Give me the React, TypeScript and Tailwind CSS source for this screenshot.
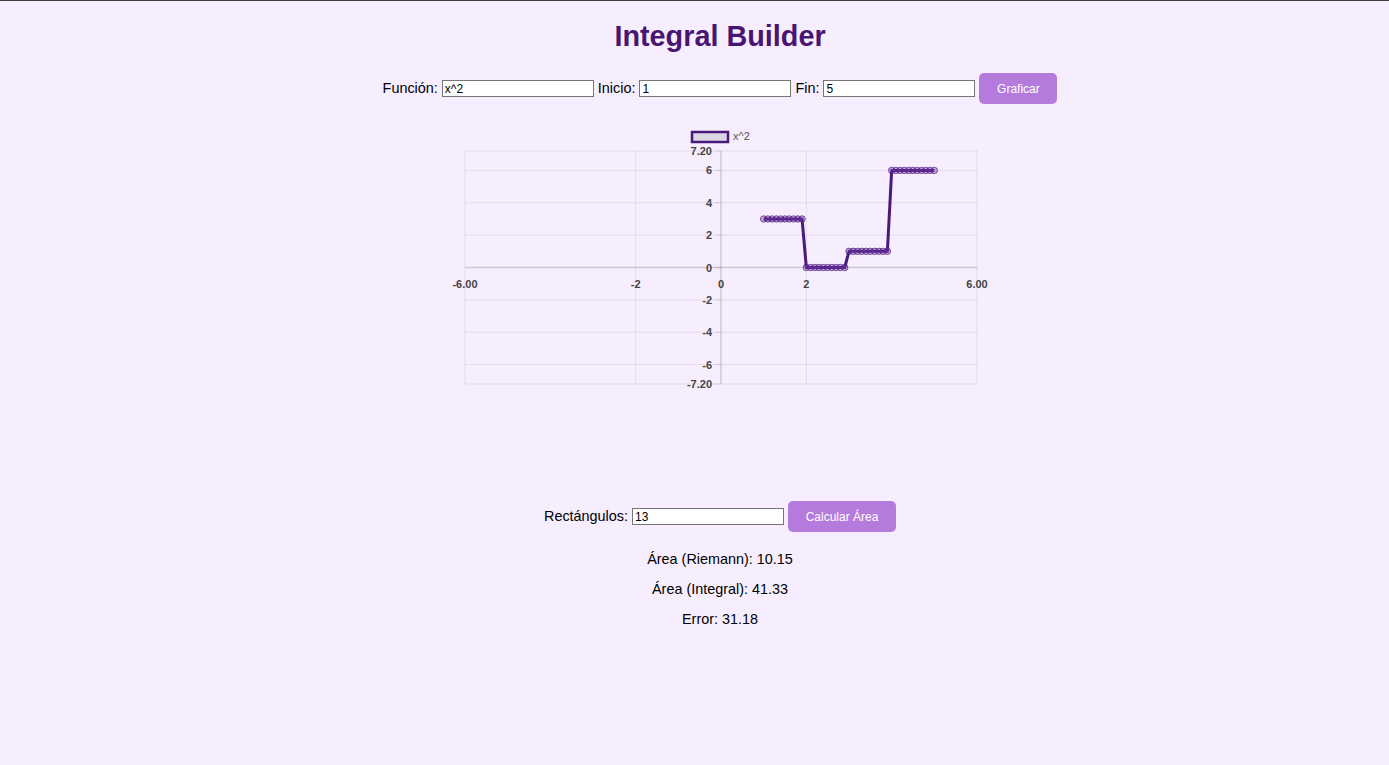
import React from "react";

const FONT = { fontFamily: '"Liberation Sans", Arial, sans-serif' };

// plot area inside the svg (svg sits at page x=420, y=112)
const LEFT = 45;
const RIGHT = 557;
const TOP = 39;
const BOTTOM = 272;
const X0 = 301;
const Y0 = 155.5;
const SX = (RIGHT - LEFT) / 12;
const SY = (BOTTOM - TOP) / 14.4;

const px = (x: number) => X0 + x * SX;
const py = (y: number) => Y0 - y * SY;

const points = Array.from({ length: 41 }, (_, i) => {
  const x = 1 + i * 0.1;
  const y = i < 10 ? 3 : i < 20 ? 0 : i < 30 ? 1 : 6;
  return { x, y };
});

function Chart() {
  const xGrid = [-6, -2, 0, 2, 6];
  const yGrid = [7.2, 6, 4, 2, 0, -2, -4, -6, -7.2];
  const xLabels: [number, string][] = [
    [-6, "-6.00"],
    [-2, "-2"],
    [0, "0"],
    [2, "2"],
    [6, "6.00"],
  ];
  const yLabels: [number, string][] = [
    [7.2, "7.20"],
    [6, "6"],
    [4, "4"],
    [2, "2"],
    [0, "0"],
    [-2, "-2"],
    [-4, "-4"],
    [-6, "-6"],
    [-7.2, "-7.20"],
  ];
  const line = points.map((p, i) => `${i ? "L" : "M"}${px(p.x)},${py(p.y)}`).join(" ");

  return (
    <svg width={600} height={380} className="mx-auto block" style={FONT}>
      {/* legend */}
      <rect x={272} y={20} width={36} height={10} fill="#dcd6e2" stroke="#4a1a7a" strokeWidth={2.5} />
      <text x={313} y={28} fontSize={11} fill="#555">
        x^2
      </text>

      {/* grid */}
      {xGrid.map((g) => (
        <line
          key={"x" + g}
          x1={px(g)}
          x2={px(g)}
          y1={TOP}
          y2={BOTTOM}
          stroke={g === 0 ? "rgba(0,0,0,0.16)" : "rgba(0,0,0,0.08)"}
          strokeWidth={g === 0 ? 1.5 : 1}
        />
      ))}
      {yGrid.map((g) => (
        <line
          key={"y" + g}
          x1={LEFT}
          x2={RIGHT}
          y1={py(g)}
          y2={py(g)}
          stroke={g === 0 ? "rgba(0,0,0,0.16)" : "rgba(0,0,0,0.08)"}
          strokeWidth={g === 0 ? 1.5 : 1}
        />
      ))}
      {/* tick marks */}
      {yGrid.map((g) => (
        <line key={"t" + g} x1={X0 - 6} x2={X0} y1={py(g)} y2={py(g)} stroke="rgba(0,0,0,0.1)" />
      ))}

      {xLabels.map(([v, t]) => (
        <text key={t} x={px(v)} y={Y0 + 20} fontSize={11} fontWeight={600} fill="#444" textAnchor="middle">
          {t}
        </text>
      ))}
      {yLabels.map(([v, t]) => (
        <text key={"l" + t} x={X0 - 9} y={py(v) + 4} fontSize={11} fontWeight={600} fill="#444" textAnchor="end">
          {t}
        </text>
      ))}

      {/* data */}
      <path d={line} fill="none" stroke="#4a1a7a" strokeWidth={3} strokeLinejoin="round" />
      {points.map((p, i) => (
        <circle
          key={i}
          cx={px(p.x)}
          cy={py(p.y)}
          r={3.2}
          fill="rgba(120,60,170,0.4)"
          stroke="rgba(74,26,122,0.7)"
          strokeWidth={1}
        />
      ))}
    </svg>
  );
}

function Field({ label, value }: { label: string; value: string }) {
  return (
    <>
      <label className="text-[14.4px] text-black">{label}</label>
      <input
        readOnly
        value={value}
        className="h-[17px] w-[152px] border border-[#767676] bg-white px-[2px] text-[12px] leading-[15px] text-black outline-none"
      />
    </>
  );
}

export default function App() {
  return (
    <div className="min-h-screen border-t border-[#3c3c3c] bg-[#f6eefe] pl-[51px] text-center" style={FONT}>
      <h1 className="pt-[19px] text-[28.8px] font-bold leading-[33px] text-[#4a1572]">Integral Builder</h1>

      <div className="mt-[20px] flex h-[31px] items-center justify-center gap-1">
        <Field label="Función:" value="x^2" />
        <Field label="Inicio:" value="1" />
        <Field label="Fin:" value="5" />
        <button className="h-[31px] w-[78px] rounded-[5px] bg-[#b57bdc] text-[12px] text-white">Graficar</button>
      </div>

      <div className="mt-[8px]">
        <Chart />
      </div>

      <div className="mt-[9px] flex h-[31px] items-center justify-center gap-1">
        <Field label="Rectángulos:" value="13" />
        <button className="h-[31px] w-[108px] rounded-[5px] bg-[#b57bdc] text-[12px] text-white">Calcular Área</button>
      </div>

      <div className="mt-[18px] text-[14.4px] leading-[18px] text-black">
        <p>Área (Riemann): 10.15</p>
        <p className="mt-[12px]">Área (Integral): 41.33</p>
        <p className="mt-[12px]">Error: 31.18</p>
      </div>
    </div>
  );
}
